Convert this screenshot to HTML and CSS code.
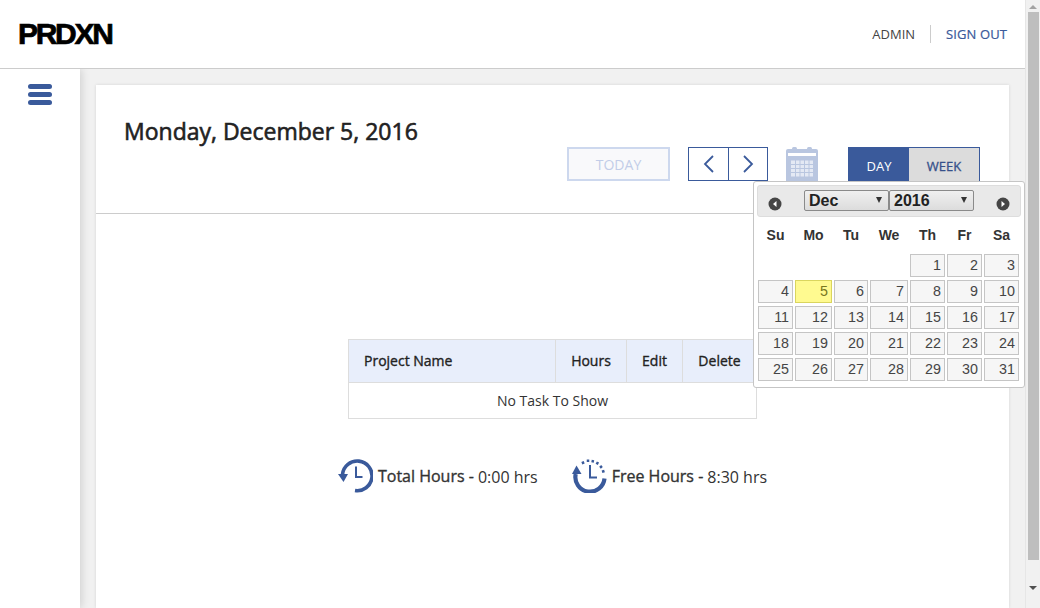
FILE: index.html
```html
<!DOCTYPE html>
<html lang="en">
<head>
    <meta charset="UTF-8">
    <meta name="viewport" content="width=device-width, initial-scale=1.0">
    <title>PRDXN Timesheet</title>
    <link rel="stylesheet" href="styles.css">
</head>
<body>

<div class="page">
    <div class="viewport">
        <header class="topbar">
            <a class="logo">PRDXN</a>
            <nav class="usernav">
                <a class="usernav-admin">ADMIN</a>
                <a class="usernav-signout">SIGN OUT</a>
            </nav>
        </header>

        <div class="layout">
            <aside class="sidebar">
                <button class="hamburger"><span></span><span></span><span></span></button>
            </aside>

            <main class="main">
                <section class="card">
                    <div class="card-head">
                        <h1 class="date-title">Monday, December 5, 2016</h1>
                        <div class="toolbar">
                            <button class="btn-today">TODAY</button>
                            <div class="day-nav">
                                <button>
                                    <svg width="11" height="18" viewBox="0 0 11 18"><path d="M10 1 2 9l8 8" fill="none" stroke="#3a5a9b" stroke-width="1.8"/></svg>
                                </button>
                                <button>
                                    <svg width="11" height="18" viewBox="0 0 11 18"><path d="m1 1 8 8-8 8" fill="none" stroke="#3a5a9b" stroke-width="1.8"/></svg>
                                </button>
                            </div>
                            <svg class="cal-icon" width="32" height="34" viewBox="0 0 32 34">
                                <path d="M3 2h27a2 2 0 0 1 2 2v30H0V4a2 2 0 0 1 2-2z" fill="#b9c6e0"/>
                                <rect x="2" y="6" width="28" height="3" fill="#fff"/>
                                <rect x="6" y="0" width="5" height="6" rx="1.5" fill="#b9c6e0"/>
                                <rect x="21" y="0" width="5" height="6" rx="1.5" fill="#b9c6e0"/>
                                <path d="M5 13.5h22v16H5z" fill="#e4e9f4"/>
                                <path d="M9.5 13v17M14 13v17M18.500 13v17M23 13v17M5 17.500h22M5 21.500h22M5 25.500h22" stroke="#b9c6e0" fill="none"/>
                            </svg>
                            <div class="view-switch">
                                <button class="view-day">DAY</button>
                                <button class="view-week">WEEK</button>
                            </div>
                        </div>
                    </div>

                    <table class="tasks">
                        <thead>
                            <tr>
                                <th class="col-name">Project Name</th>
                                <th class="col-hours">Hours</th>
                                <th class="col-edit">Edit</th>
                                <th class="col-delete">Delete</th>
                            </tr>
                        </thead>
                        <tbody>
                            <tr><td colspan="4">No Task To Show</td></tr>
                        </tbody>
                    </table>

                    <div class="totals">
                        <div class="total">
                            <svg class="icon-total" width="35" height="34" viewBox="0 0 35 34">
                                <path d="M4.500 15.500A14.800 14.800 0 1 1 17 31.500" fill="none" stroke="#3a5a9b" stroke-width="3.600"/>
                                <path d="M0 15h10l-4.500 8z" fill="#3a5a9b"/>
                                <path d="M18 7.500v10.500h6.500" fill="none" stroke="#3a5a9b" stroke-width="2"/>
                            </svg>
                            <span class="total-label">Total Hours -</span>
                            <span class="total-value">0:00 hrs</span>
                        </div>
                        <div class="total">
                            <svg class="icon-free" width="36" height="34" viewBox="0 0 36 34">
                                <path d="M3.700 15A14.600 14.600 0 1 0 32.500 19.500" fill="none" stroke="#3a5a9b" stroke-width="4.200"/>
                                <path d="M0 15 4.500 6.500 9.500 15z" fill="#3a5a9b"/>
                                <path d="M18 6v12.500h7" fill="none" stroke="#3a5a9b" stroke-width="2"/>
                                <path d="M10.500 2.500 11.500 5M16 .5v2.500M21 1l-.5 2.500M26 3l-1.300 2.300M30 7l-2 1.700M32.500 12l-2.500.8" fill="none" stroke="#3a5a9b" stroke-width="2.500"/>
                            </svg>
                            <span class="total-label">Free Hours -</span>
                            <span class="total-value">8:30 hrs</span>
                        </div>
                    </div>
                </section>
            </main>
        </div>

        <div class="datepicker">
            <div class="dp-head">
                <svg class="dp-arrow" width="14" height="14" viewBox="0 0 14 14"><circle cx="7" cy="7" r="6.500" fill="#454545"/><path d="M8.500 4v6L5 7z" fill="#fff"/></svg>
                <div class="dp-selects">
                    <div class="dp-select">
                        <select><option>Dec</option></select>
                    </div>
                    <div class="dp-select">
                        <select><option>2016</option></select>
                    </div>
                </div>
                <svg class="dp-arrow" width="14" height="14" viewBox="0 0 14 14"><circle cx="7" cy="7" r="6.500" fill="#454545"/><path d="M5.500 4v6L9 7z" fill="#fff"/></svg>
            </div>
            <div class="dp-grid">
                <div class="dp-dow">Su</div><div class="dp-dow">Mo</div><div class="dp-dow">Tu</div><div class="dp-dow">We</div><div class="dp-dow">Th</div><div class="dp-dow">Fr</div><div class="dp-dow">Sa</div>

                <div></div><div></div><div></div><div></div>
                <div class="dp-day">1</div><div class="dp-day">2</div><div class="dp-day">3</div>

                <div class="dp-day">4</div><div class="dp-day dp-today">5</div><div class="dp-day">6</div><div class="dp-day">7</div><div class="dp-day">8</div><div class="dp-day">9</div><div class="dp-day">10</div>
                <div class="dp-day">11</div><div class="dp-day">12</div><div class="dp-day">13</div><div class="dp-day">14</div><div class="dp-day">15</div><div class="dp-day">16</div><div class="dp-day">17</div>
                <div class="dp-day">18</div><div class="dp-day">19</div><div class="dp-day">20</div><div class="dp-day">21</div><div class="dp-day">22</div><div class="dp-day">23</div><div class="dp-day">24</div>
                <div class="dp-day">25</div><div class="dp-day">26</div><div class="dp-day">27</div><div class="dp-day">28</div><div class="dp-day">29</div><div class="dp-day">30</div><div class="dp-day">31</div>
            </div>
        </div>
    </div>

    <div class="scrollbar">
        <div class="scroll-up"></div>
        <div class="scroll-thumb"></div>
        <div class="scroll-down"></div>
    </div>
</div>

</body>
</html>
```

FILE: styles.css
```css
* {
    box-sizing: border-box;
}

html, body {
    margin: 0;
    padding: 0;
    height: 100%;
    overflow: hidden;
}

body {
    font-family: "Open Sans", Arial, sans-serif;
    color: #333;
    background-color: #f1f1f1;
}

button {
    font-family: inherit;
    padding: 0;
}

.page {
    display: flex;
    height: 608px;
}

.viewport {
    position: relative;
    flex: 1;
    display: flex;
    flex-direction: column;
    min-width: 0;
}

/* top bar */
.topbar {
    position: relative;
    z-index: 1;
    height: 69px;
    flex-shrink: 0;
    display: flex;
    align-items: center;
    justify-content: space-between;
    padding: 0 18px 0 18px;
    background-color: white;
    border-bottom: 1px solid #ccc;
}

.logo {
    font-family: "Liberation Sans", Arial, sans-serif;
    font-weight: bold;
    font-size: 30px;
    line-height: 34px;
    letter-spacing: -2.3px;
    color: #000;
    -webkit-text-stroke: 0.7px #000;
}

.usernav {
    display: flex;
    align-items: center;
    font-size: 13px;
}

.usernav-admin {
    color: #444;
    padding-right: 15px;
    border-right: 1px solid #ccc;
}

.usernav-signout {
    color: #3a5a9b;
    padding-left: 15px;
    letter-spacing: 0.1px;
    -webkit-text-stroke: 0.2px #3a5a9b;
}

/* sidebar */
.layout {
    flex: 1;
    display: flex;
    min-height: 0;
}

.sidebar {
    width: 80px;
    flex-shrink: 0;
    background-color: white;
    box-shadow: 1px 0 9px rgba(0, 0, 0, 0.16);
    padding: 15px 0 0 28px;
    position: relative;
}

.hamburger {
    display: flex;
    flex-direction: column;
    gap: 3px;
    width: 24px;
    background: none;
    border: none;
}

.hamburger span {
    display: block;
    height: 5px;
    border-radius: 3px;
    background-color: #3a5a9b;
}

/* main card */
.main {
    flex: 1;
    min-width: 0;
    padding: 16px 16px 0;
}

.card {
    height: 100%;
    background-color: white;
    box-shadow: 0 0 3px rgba(0, 0, 0, 0.12);
}

.card-head {
    height: 129px;
    padding: 30px 29px 0 28px;
    border-bottom: 1px solid #ccc;
}

.date-title {
    margin: 0;
    height: 32px;
    font-size: 23px;
    line-height: 32px;
    font-weight: 400;
    color: #222;
    -webkit-text-stroke: 0.6px #222;
}

.toolbar {
    display: flex;
    justify-content: flex-end;
    align-items: flex-start;
}

.btn-today {
    width: 103px;
    height: 34px;
    background-color: #f9f9fb;
    border: 2px solid #cdd8ee;
    color: #c2cde8;
    font-size: 14px;
    margin-right: 18px;
}

.day-nav {
    display: flex;
    height: 34px;
    border: 1px solid #3a5a9b;
    margin-right: 18px;
}

.day-nav button {
    width: 39px;
    background: white;
    border: none;
    display: flex;
    align-items: center;
    justify-content: center;
}

.day-nav button + button {
    border-left: 1px solid #3a5a9b;
}

.cal-icon {
    margin-right: 30px;
}

.view-switch {
    display: flex;
    width: 132px;
    height: 38px;
    border: 1px solid #3a5a9b;
}

.view-switch button {
    border: none;
    font-size: 13px;
}

.view-day {
    width: 60px;
    background-color: #3a5a9b;
    color: white;
}

.view-week {
    flex: 1;
    background-color: #dcdcdc;
    color: #36508a;
    -webkit-text-stroke: 0.3px #36508a;
}

/* task table */
.tasks {
    width: 409px;
    margin: 125px auto 0;
    border-collapse: collapse;
    font-size: 14px;
}

.tasks th, .tasks td {
    border: 1px solid #ddd;
    text-align: center;
}

.tasks th {
    height: 43px;
    padding-bottom: 2px;
    background-color: #e8eefb;
    font-weight: 400;
    color: #222;
    -webkit-text-stroke: 0.35px #222;
}

.tasks td {
    height: 36px;
    color: #333;
}

.tasks .col-name {
    width: 207px;
    text-align: left;
    padding-left: 15px;
}

.col-hours {
    width: 71px;
}

.col-edit {
    width: 56px;
}

/* totals */
.totals {
    display: flex;
    justify-content: center;
    gap: 34px;
    margin-top: 40px;
}

.total {
    display: flex;
    align-items: center;
}

.icon-total {
    margin-right: 5px;
}

.icon-free {
    margin-right: 4px;
}

.total-label {
    font-size: 16px;
    color: #333;
    margin-right: 4px;
    -webkit-text-stroke: 0.35px #333;
}

.total-value {
    font-size: 16px;
    color: #333;
    position: relative;
    top: 1px;
}

/* date picker popup */
.datepicker {
    position: absolute;
    top: 181px;
    left: 753px;
    width: 272px;
    height: 207px;
    padding: 3px;
    background-color: white;
    border: 1px solid #c5c5c5;
    border-radius: 3px;
    font-family: "Liberation Sans", Arial, sans-serif;
}

.dp-head {
    height: 32px;
    display: flex;
    align-items: center;
    justify-content: space-between;
    padding: 4px 10px 0 10px;
    background-color: #e9e9e9;
    border: 1px solid #ddd;
    border-radius: 3px;
}

.dp-arrow {
    margin-top: 1px;
}

.dp-selects {
    display: flex;
    margin-top: -6px;
}

.dp-select {
    position: relative;
    width: 85px;
    height: 21px;
}

.dp-select::after {
    content: "";
    position: absolute;
    top: 7px;
    right: 7px;
    border-left: 3.5px solid transparent;
    border-right: 3.5px solid transparent;
    border-top: 6px solid #333;
}

.dp-select select {
    appearance: none;
    width: 100%;
    height: 100%;
    padding: 0 0 0 4px;
    font-family: inherit;
    font-size: 16px;
    font-weight: bold;
    color: #222;
    background: linear-gradient(#f0f0f0, #dcdcdc);
    border: 1px solid #8a8a8a;
    border-radius: 2px;
}

.dp-grid {
    display: grid;
    grid-template-columns: 35px 37px 34px 38px 35px 35px 35px;
    grid-template-rows: 28px;
    grid-auto-rows: 23px;
    column-gap: 2px;
    row-gap: 3px;
    margin: 0 0 0 1px;
    padding-top: 6px;
}

.dp-dow {
    font-size: 14px;
    font-weight: bold;
    text-align: center;
    line-height: 24px;
    color: #333;
}

.dp-day {
    background-color: #f6f6f6;
    border: 1px solid #c5c5c5;
    color: #454545;
    font-size: 14.3px;
    line-height: 21px;
    text-align: right;
    padding-right: 3px;
}

.dp-today {
    background-color: #fffa90;
    border-color: #dad55e;
    color: #777620;
}

/* page scrollbar */
.scrollbar {
    position: relative;
    width: 15px;
    flex-shrink: 0;
    background-color: #f1f1f1;
    border-left: 1px solid #e6e6e6;
    display: flex;
    flex-direction: column;
    align-items: center;
}

.scroll-up {
    width: 0;
    height: 0;
    margin: 5px 0 3px;
    border-left: 4px solid transparent;
    border-right: 4px solid transparent;
    border-bottom: 4px solid #a3a3a3;
}

.scroll-thumb {
    width: 11px;
    height: 548px;
    background-color: #bebebe;
}

.scroll-down {
    width: 0;
    height: 0;
    margin-top: 26px;
    border-left: 4px solid transparent;
    border-right: 4px solid transparent;
    border-top: 4px solid #505050;
}
```
